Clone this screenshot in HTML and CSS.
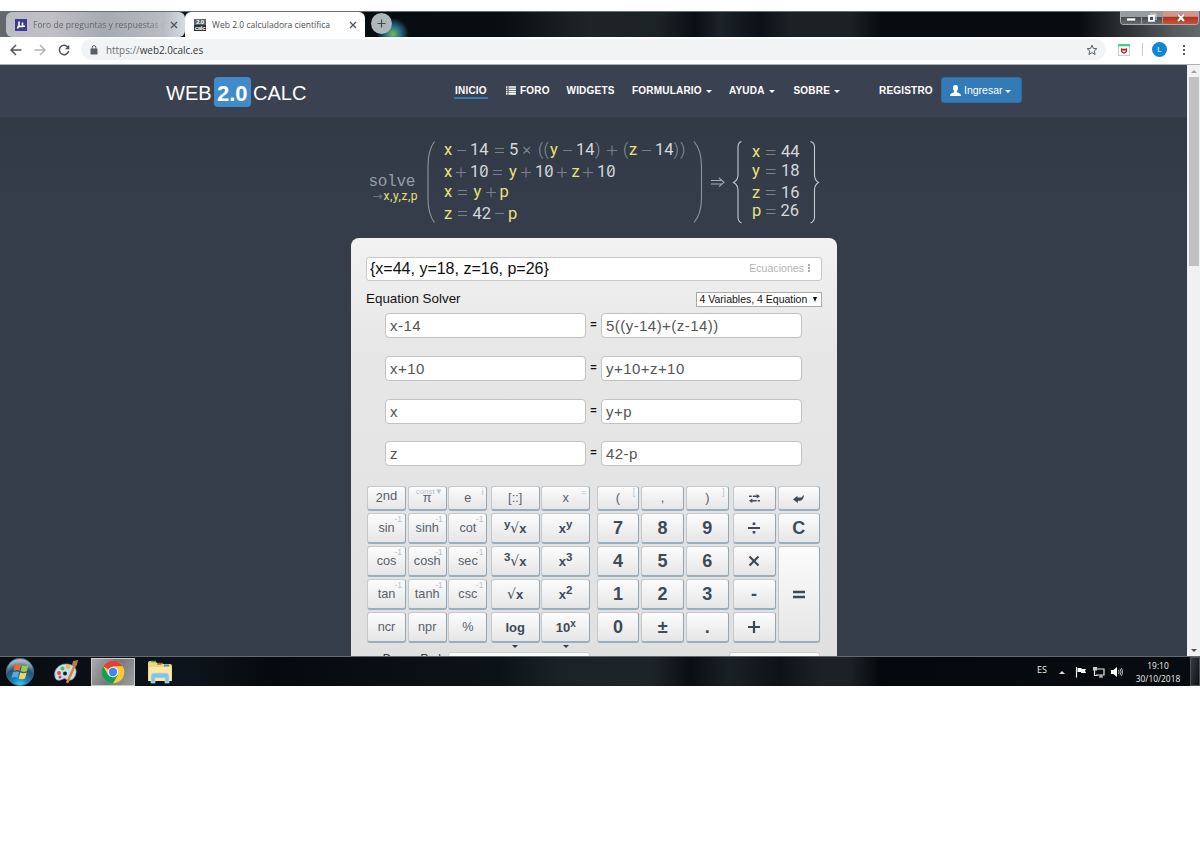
FILE: index.html
```html
<!DOCTYPE html>
<html lang="es">
<head>
    <meta charset="UTF-8">
    <title>Web 2.0 calculadora científica</title>
    <link rel="stylesheet" href="styles.css">
</head>
<body>

<div class="screen">
    <!-- Browser tabs -->
    <div class="tabstrip">
        <div class="tab tab-back">
            <svg class="favicon" viewBox="0 0 12 12"><rect width="12" height="12" fill="#3b3d94"/><path d="M4 2.500V7.500H7.500V3.500M7.500 7.200H10M3.500 7L2.500 9.500" fill="none" stroke="#fff" stroke-width="1.600"/></svg>
            <span class="tab-title faded">Foro de preguntas y respuestas d</span>
            <svg class="close" viewBox="0 0 8 8"><path d="M1 1l6 6M7 1L1 7"/></svg>
        </div>
        <div class="tab tab-active">
            <div class="favicon calc-icon"><span>2.0</span><span>calc</span></div>
            <span class="tab-title">Web 2.0 calculadora científica</span>
            <svg class="close" viewBox="0 0 8 8"><path d="M1 1l6 6M7 1L1 7"/></svg>
        </div>
        <div class="new-tab"><svg viewBox="0 0 10 10"><path d="M5 .5v9M.5 5h9" stroke="#444b50" stroke-width="1.300"/></svg></div>
        <div class="window-buttons">
            <span class="min"><svg viewBox="0 0 12 10"><rect x="1.500" y="5" width="9" height="3" fill="#fff" stroke="#444" stroke-width=".6"/></svg></span>
            <span class="max"><svg viewBox="0 0 12 10"><path d="M4 1h6v6" fill="none" stroke="#ddd" stroke-width="1"/><path d="M3 2.800h5v5h-5z" fill="none" stroke="#fff" stroke-width="1.800"/></svg></span>
            <span class="quit"><svg viewBox="0 0 12 10"><path d="M3 1.500l6 6.500M9 1.500l-6 6.500" stroke="#5d3b3b" stroke-width="3.300"/><path d="M3 1.500l6 6.500M9 1.500l-6 6.500" stroke="#fff" stroke-width="2.200"/></svg></span>
        </div>
    </div>

    <!-- Address bar -->
    <div class="toolbar">
        <svg class="tool" viewBox="0 0 12 12"><path d="M11.500 6H1.500M6 1L1 6l5 5" stroke="#50545a"/></svg>
        <svg class="tool" viewBox="0 0 12 12"><path d="M.5 6h10M6 1l5 5-5 5" stroke="#b2b4b8"/></svg>
        <svg class="tool" viewBox="0 0 12 12"><path d="M10 3.300A4.700 4.700 0 1 0 10.700 7" stroke="#50545a"/><path d="M11.300 .8v4.400H6.900z" fill="#50545a" stroke="none"/></svg>
        <div class="address">
            <svg class="lock" viewBox="0 0 8 10"><rect x=".5" y="3.500" width="7" height="6" rx=".6" fill="#5a5e63"/><path d="M2.200 4V2.400a1.800 1.800 0 0 1 3.600 0V4" fill="none" stroke="#5a5e63"/></svg>
            <span class="url"><i>https://</i>web2.0calc.es</span>
            <svg class="star" viewBox="0 0 12 12"><path d="M6 1.200l1.400 3.200 3.500.3-2.700 2.300.9 3.500L6 8.600l-3.100 1.900.9-3.500L1.100 4.700l3.500-.3z" fill="none" stroke="#5a5e63"/></svg>
        </div>
        <svg class="shield" viewBox="0 0 12 12"><rect x=".5" y=".5" width="11" height="11" fill="#fff" stroke="#ccc"/><rect width="12" height="2.300" fill="#40cf8b"/><path d="M3 4l1.500.7h3L9 4v4L6 10 3 8z" fill="#c8202f"/><path d="M5 6.200v1.500h2V6.200" fill="none" stroke="#fff"/></svg>
        <div class="divider"></div>
        <div class="avatar">L</div>
        <div class="dots"></div>
    </div>

    <div class="viewport">
        <div class="page">
            <header class="site-header">
                <div class="logo">WEB<b>2.0</b>CALC</div>
                <nav class="menu">
                    <span><u>INICIO</u></span>
                    <span><svg class="list" viewBox="0 0 10 9"><path d="M0 1h1.500M2.500 1H10M0 3.300h1.500M2.500 3.300H10M0 5.600h1.500M2.500 5.600H10M0 7.900h1.500M2.500 7.900H10" stroke="#fff" stroke-width="1.600"/></svg>FORO</span>
                    <span>WIDGETS</span>
                    <span>FORMULARIO<em class="caret"></em></span>
                    <span>AYUDA<em class="caret"></em></span>
                    <span>SOBRE<em class="caret"></em></span>
                    <span>REGISTRO</span>
                </nav>
                <div class="login"><svg viewBox="0 0 11 11"><path d="M5.500 0C7.500 0 8.300 1.400 8.100 3.200 7.900 4.700 7.300 5.500 6.900 6v1.300c1.500.8 4.100 1 4.100 3.700H0c0-2.700 2.600-2.900 4.100-3.700V6C3.700 5.500 3.100 4.700 2.900 3.200 2.700 1.400 3.500 0 5.500 0z" fill="#fff"/></svg>Ingresar<em class="caret"></em></div>
            </header>

            <!-- Typeset formula -->
            <svg class="formula" viewBox="360 135 470 95">
                <g class="brackets">
                    <path d="M434.500 141.500Q428 150 428 166V198Q428 214 434.500 222.500"/>
                    <path d="M694 141.500Q701.500 150 701.500 166V198Q701.500 214 694 222.500"/>
                    <path class="brace" d="M741.500 141.500Q738 142.500 738 147V175Q738 180 733.500 182.500Q738 185 738 190V217Q738 221.500 741.500 223"/>
                    <path class="brace" d="M810.500 141.500Q814.500 142.500 814.500 147V175Q814.500 180 818.500 182.500Q814.500 185 814.500 190V217Q814.500 221.500 810.500 223"/>
                    <path class="arrow" d="M711 180.500h11M711 184h11M719 178l5 4.300-5 4.300"/>
                    <path class="faint" d="M373 196.500h9M379.500 194.500l2.500 2-2.500 2"/>
                </g>
                <text class="solve" x="368.500" y="186">solve</text>
                <text class="small v" x="383.500" y="199.500">x,y,z,p</text>
                <g class="ops">
                    <path d="M457 150.500h9M495 148.500h9M495 152.500h9M523.500 147l6.500 6.500M530 147l-6.500 6.500M563 150.500h9M607 150.500h10M612 145.500v10M642 150.500h9"/>
                    <path d="M456 172.500h10M461 167.500v10M493 170.500h9M493 174.500h9M521 172.500h10M526 167.500v10M557 172.500h10M562 167.500v10M583 172.500h10M588 167.500v10"/>
                    <path d="M458 190.500h9M458 194.500h9M486 192.500h10M491 187.500v10M458 211.500h9M458 215.500h9M495 213.500h9"/>
                    <path d="M766 150.500h9.500M766 154.500h9.500M766 169.500h9.500M766 173.500h9.500M766 190.500h9.500M766 194.500h9.500M766 209.500h9.500M766 213.500h9.500"/>
                </g>
                <text y="155"><tspan class="v" x="444">x</tspan><tspan x="470">14</tspan><tspan x="509">5</tspan><tspan class="p" x="538 543.500">((</tspan><tspan class="v" x="550">y</tspan><tspan x="576">14</tspan><tspan class="p" x="595">)</tspan><tspan class="p" x="623">(</tspan><tspan class="v" x="629">z</tspan><tspan x="655">14</tspan><tspan class="p" x="673.500 680">))</tspan></text>
                <text y="177"><tspan class="v" x="444">x</tspan><tspan x="470">10</tspan><tspan class="v" x="509">y</tspan><tspan x="535">10</tspan><tspan class="v" x="571.500">z</tspan><tspan x="597">10</tspan></text>
                <path class="slash" d="M482 173.500l3.500-5.500M547 173.500l3.500-5.500M609 173.500l3.500-5.500"/>
                <text y="197"><tspan class="v" x="444">x</tspan><tspan class="v" x="473.500">y</tspan><tspan class="v" x="499.500">p</tspan></text>
                <text y="218.500"><tspan class="v" x="444">z</tspan><tspan x="472.500">42</tspan><tspan class="v" x="508">p</tspan></text>
                <text y="157"><tspan class="v" x="752">x</tspan><tspan x="781">44</tspan></text>
                <text y="176"><tspan class="v" x="752">y</tspan><tspan x="781">18</tspan></text>
                <text y="197.500"><tspan class="v" x="752">z</tspan><tspan x="781">16</tspan></text>
                <text y="216"><tspan class="v" x="752">p</tspan><tspan x="780.500">26</tspan></text>
            </svg>

            <main class="calculator">
                <div class="answer"><span>{x=44, y=18, z=16, p=26}</span><span class="mode">Ecuaciones <i class="more"></i></span></div>
                <div class="solver-head">
                    <span>Equation Solver</span>
                    <div class="select">4 Variables, 4 Equation<em></em></div>
                </div>
                <div class="equations">
                    <div class="equation"><div class="field">x-14</div><b>=</b><div class="field">5((y-14)+(z-14))</div></div>
                    <div class="equation"><div class="field">x+10</div><b>=</b><div class="field">y+10+z+10</div></div>
                    <div class="equation"><div class="field">x</div><b>=</b><div class="field">y+p</div></div>
                    <div class="equation"><div class="field">z</div><b>=</b><div class="field">42-p</div></div>
                </div>

                <div class="keypad">
                    <div class="keys functions">
                        <div class="key">2<sup>nd</sup></div>
                        <div class="key"><small class="const">const▼</small>π</div>
                        <div class="key">e<small>i</small></div>
                        <div class="key">sin<small>-1</small></div>
                        <div class="key">sinh<small>-1</small></div>
                        <div class="key">cot<small>-1</small></div>
                        <div class="key">cos<small>-1</small></div>
                        <div class="key">cosh<small>-1</small></div>
                        <div class="key">sec<small>-1</small></div>
                        <div class="key">tan<small>-1</small></div>
                        <div class="key">tanh<small>-1</small></div>
                        <div class="key">csc<small>-1</small></div>
                        <div class="key">ncr</div>
                        <div class="key">npr</div>
                        <div class="key">%</div>
                    </div>
                    <div class="keys powers">
                        <div class="key light">[::]</div>
                        <div class="key light">x<small>=</small></div>
                        <div class="key"><sup>y</sup><span class="root">√</span>x</div>
                        <div class="key">x<sup>y</sup></div>
                        <div class="key"><sup>3</sup><span class="root">√</span>x</div>
                        <div class="key">x<sup>3</sup></div>
                        <div class="key"><span class="root">√</span>x</div>
                        <div class="key">x<sup>2</sup></div>
                        <div class="key">log<em class="below"></em></div>
                        <div class="key">10<sup class="tiny">x</sup><em class="below"></em></div>
                    </div>
                    <div class="keys digits">
                        <div class="key light">(<small>[</small></div>
                        <div class="key light">,</div>
                        <div class="key light">)<small>]</small></div>
                        <div class="key">7</div>
                        <div class="key">8</div>
                        <div class="key">9</div>
                        <div class="key">4</div>
                        <div class="key">5</div>
                        <div class="key">6</div>
                        <div class="key">1</div>
                        <div class="key">2</div>
                        <div class="key">3</div>
                        <div class="key">0</div>
                        <div class="key">±</div>
                        <div class="key">.</div>
                    </div>
                    <div class="keys operators">
                        <div class="key"><svg width="11" height="9" viewBox="0 0 10 8"><path d="M0 2h2.500M3.500 2h4M10 6H8M7 6H2" stroke="#3e4b57" stroke-width="1.300"/><path d="M7 0l3 2-3 2zM3 4L0 6l3 2z" fill="#3e4b57"/></svg></div>
                        <div class="key"><svg width="11" height="9" viewBox="0 0 10 8"><path d="M0 4.800L4 1.500v1.700h3q1.200 0 1.800-1.700L10 1Q9.500 5.500 6.500 6H4.500v2z" fill="#3e4b57"/></svg></div>
                        <div class="key"><svg width="14" height="14" viewBox="0 0 14 14"><path d="M1 7h12" stroke="#3e4b57" stroke-width="2"/><rect x="5.700" y="1.500" width="2.600" height="2.500" fill="#3e4b57"/><rect x="5.700" y="10" width="2.600" height="2.500" fill="#3e4b57"/></svg></div>
                        <div class="key">C</div>
                        <div class="key"><svg width="12" height="12" viewBox="0 0 12 12"><path d="M1.500 1.500l9 9M10.500 1.500l-9 9" stroke="#3e4b57" stroke-width="2.200"/></svg></div>
                        <div class="key equals"><svg width="14" height="12" viewBox="0 0 14 12"><path d="M1 4h12M1 9h12" stroke="#3e4b57" stroke-width="2.600"/></svg></div>
                        <div class="key">-</div>
                        <div class="key"><svg width="14" height="14" viewBox="0 0 14 14"><path d="M1 7h12M7 1v12" stroke="#3e4b57" stroke-width="2.200"/></svg></div>
                    </div>
                </div>

                <div class="options">
                    <div class="radios"><span>● Deg</span><span>● Rad</span></div>
                    <div class="history"></div>
                    <div class="side"></div>
                </div>
            </main>
        </div>
        <div class="scrollbar"><i class="up"></i><div class="thumb"></div><i class="down"></i></div>
    </div>

    <!-- Windows taskbar -->
    <div class="taskbar">
        <svg class="start" viewBox="0 0 30 30">
            <defs>
                <radialGradient id="orb" cx=".5" cy="1" r=".9"><stop offset="0" stop-color="#38d4ff"/><stop offset=".35" stop-color="#1680b8"/><stop offset=".7" stop-color="#245373"/><stop offset="1" stop-color="#a3bac7"/></radialGradient>
            </defs>
            <circle cx="15" cy="15" r="13.700" fill="url(#orb)" stroke="#46647a"/>
            <path d="M10 8q3.500-2 6-.3l-1.500 6q-3-1.500-6.200.3z" fill="#ee6a31"/>
            <path d="M17 8.200q3 1.500 6.500-.2l-1.600 6.200q-3.200 1.500-6.400-.1z" fill="#9bca4a"/>
            <path d="M8 15.300q3.200-1.700 6.200-.2l-1.500 5.700q-3-1.500-6.200.2z" fill="#54a9e1"/>
            <path d="M15.200 15.500q3.200 1.600 6.400.1l-1.600 5.900q-3.200 1.600-6.300 0z" fill="#ffd24b"/>
        </svg>
        <svg class="paint" viewBox="0 0 26 26">
            <path d="M2 18C0 11 6 5 13 5s11 4 10 9-4 8-8 7c-3-1-3-2-5-1s-7 3-8-2z" fill="#c6dff0" stroke="#809db3" stroke-width=".7"/>
            <circle cx="6" cy="14" r="2" fill="#e14e43"/><circle cx="9.500" cy="9.500" r="2" fill="#63b84a"/><circle cx="15" cy="7.800" r="2.200" fill="#f4b631"/><circle cx="7" cy="18" r="1.500" fill="#cd4141"/><circle cx="12" cy="14.500" r="2" fill="#17212a"/>
            <path d="M14 24L22 6" stroke="#dd822e" stroke-width="2.500"/><path d="M19 6l1-4 5-1-1 5-2 2z" fill="#b47a50"/>
        </svg>
        <div class="task-active">
            <svg viewBox="0 0 24 24"><circle cx="12" cy="12" r="11.300" fill="#f9ca34"/><path d="M12 12L2.200 6.300A11.300 11.300 0 0 1 21.800 6.300H12z" fill="#db4437"/><path d="M2.200 6.300A11.300 11.300 0 0 0 12 23.300L17 14.800 7 14.800z" fill="#159b5a"/><circle cx="12" cy="12" r="5.300" fill="#f3f3f3"/><circle cx="12" cy="12" r="4.200" fill="#4285f4"/></svg>
        </div>
        <svg class="folder" viewBox="0 0 26 24">
            <path d="M1 3q0-2 2-2h5l2 2h5l1 1h7q2 0 2 2v15H1z" fill="#edd77f"/><path d="M2 7h22v14H2z" fill="#fae9a3"/><path d="M4 1.500h5M10 4h4" stroke="#46a849" stroke-width="1.500"/><path d="M11 3.500h4" stroke="#cf4d38" stroke-width="1.500"/><path d="M17 5.500h5" stroke="#438dd5" stroke-width="2"/>
            <path d="M4 23v-7q0-3 3-3h12q3 0 3 3v7h-4v-5H8v5z" fill="#86c5e2" stroke="#b9e3f2" stroke-width=".7"/>
        </svg>
        <div class="tray">
            <span class="lang">ES</span>
            <i class="tray-up"></i>
            <svg class="flag" viewBox="0 0 12 12"><path d="M1.500 1v10.500" stroke="#eee" stroke-width="1.200"/><path d="M2.500 2h4v1h4.500l-1 1.700 1 2.300H6V6H2.500z" fill="#fff"/></svg>
            <svg class="network" viewBox="0 0 12 12"><path d="M3 3h8v6H3M6 11h4M8 9v2M1.500 4v5.500h3" fill="none" stroke="#e5e5e5" stroke-width="1.200"/><rect x="0" y="1" width="4" height="3.500" fill="#ccc"/></svg>
            <svg class="volume" viewBox="0 0 12 12"><path d="M0 4h2.500L6 1v10L2.500 8H0z" fill="#fff"/><path d="M7.500 4q1.200 2 0 4M9 2.700q2.200 3.300 0 6.600M10.500 2q2.500 4 0 8" fill="none" stroke="#ddd" stroke-width=".8"/></svg>
            <div class="clock">19:10<br>30/10/2018</div>
            <div class="show-desktop"></div>
        </div>
    </div>
</div>

</body>
</html>
```

FILE: styles.css
```css
* {
    box-sizing: border-box;
}

body {
    margin: 0;
    background: #fff;
    font-family: "Liberation Sans", Arial, sans-serif;
}

svg {
    display: block;
    flex: none;
}

i {
    font-style: normal;
}

.screen {
    width: 1200px;
    height: 675px;
    margin-top: 11px;
    overflow: hidden;
}

/* Browser chrome */
.tabstrip {
    height: 26px;
    display: flex;
    padding-left: 6px;
    background:
        radial-gradient(circle at 393px 22px, #76bd58 0, #28748b 7px, transparent 16px),
        linear-gradient(90deg, #63686b 0, #63686b 6px, #060b10 200px, #080d12 500px, #1e2428 590px, #1b2226 660px, #0a0f14 695px, #1b2228 720px, #0b1116 760px, #1b2125 790px, #1b2125 850px, #070c11 880px, #080c11 1080px, #565b5f 1175px, #64696c);
    border-top: 1px solid #6b6f71;
    font-family: "Open Sans", "Noto Sans", sans-serif;
    font-size: 8.5px;
}

.tab {
    height: 25px;
    display: flex;
    align-items: center;
    padding-left: 9px;
    border-radius: 6px 6px 0 0;
    color: #4b4e52;
}

.tab-back {
    width: 179px;
    background: linear-gradient(90deg, #babdc4, #c1bfc6 25%, #a5abb1 55%, #b9bcc2 88%, #d4dce3);
    border-radius: 6px;
    color: #64676d;
}

.tab-active {
    width: 180px;
    background: #fff;
}

.favicon {
    width: 12px;
    height: 12px;
    margin-right: 6px;
}

.calc-icon {
    display: flex;
    flex-direction: column;
    background: linear-gradient(#5b646a 50%, #293137 50%);
    color: #fff;
    font: bold 6px/6px "Liberation Sans", sans-serif;
    text-align: center;
    letter-spacing: -.3px;
}

.tab-title {
    width: 132px;
    white-space: nowrap;
    overflow: hidden;
    letter-spacing: .03px;
}

.faded {
    -webkit-mask-image: linear-gradient(90deg, #000 88%, transparent);
}

.close {
    width: 8px;
    height: 8px;
    margin-left: 5px;
    stroke: #50545a;
    stroke-width: 1.3;
}

.new-tab {
    width: 21px;
    height: 21px;
    margin: 1px 0 0 6px;
    border-radius: 50%;
    background: #aeb8b9;
    display: flex;
    align-items: center;
    justify-content: center;
}

.new-tab svg {
    width: 9px;
    height: 9px;
}

.window-buttons {
    display: flex;
    width: 79px;
    height: 14px;
    margin: -1px 1px 0 auto;
    border: 1px solid #a9abad;
    border-top: 0;
    border-radius: 0 0 4px 4px;
    overflow: hidden;
}

.window-buttons span {
    width: 21px;
    border-right: 1px solid #999;
    background: linear-gradient(#999c9e 45%, #474c50 50%, #686d70);
    display: flex;
    align-items: center;
    justify-content: center;
}

.window-buttons .quit {
    flex: 1;
    border: 0;
    background: linear-gradient(#d1978d 40%, #b2341e 50%, #c95439);
}

.window-buttons svg {
    width: 12px;
    height: 10px;
}

.toolbar {
    height: 28px;
    display: flex;
    align-items: center;
    padding: 0 15px 2px 10px;
    background: #fff;
    border-bottom: 1px solid #adb0b4;
}

.tool {
    width: 12px;
    height: 12px;
    margin-right: 12px;
    fill: none;
    stroke-width: 1.5;
}

.address {
    flex: 1;
    height: 21px;
    margin-right: 12px;
    padding: 0 8px 0 9px;
    border-radius: 11px;
    background: #f1f3f4;
    display: flex;
    align-items: center;
}

.tool + .address {
    margin-left: -1px;
}

.lock {
    width: 8px;
    height: 10px;
}

.url {
    flex: 1;
    margin-left: 8px;
    font: 9.9px "Open Sans", sans-serif;
    color: #35383c;
}

.url i {
    color: #6b6f74;
}

.star {
    width: 12px;
    height: 12px;
}

.shield {
    width: 12px;
    height: 12px;
}

.divider {
    width: 1px;
    height: 13px;
    margin: 0 9px 0 12px;
    background: #c9cbce;
}

.avatar {
    width: 15px;
    height: 15px;
    margin-right: 16px;
    border-radius: 50%;
    background: #0d87d2;
    color: #fff;
    font-size: 8px;
    line-height: 15px;
    text-align: center;
}

.dots {
    width: 2px;
    height: 2px;
    background: #55595e;
    box-shadow: 0 -4px #55595e, 0 4px #55595e;
}

/* Web page */
.viewport {
    height: 591px;
    display: flex;
}

.page {
    width: 1187px;
    overflow: hidden;
    background: linear-gradient(#2f3944, #343d49 25%, #343d49);
}

.site-header {
    height: 53px;
    display: flex;
    align-items: flex-start;
    padding-left: 166px;
    background: #3a4252;
    border-bottom: 1px solid #343b49;
    color: #fff;
}

.logo {
    width: 289px;
    padding-top: 12px;
    display: flex;
    font-size: 20px;
    line-height: 33px;
}

.logo b {
    width: 37.5px;
    height: 30px;
    margin: 0 2px 0 2px;
    border-radius: 4px;
    background: #428bca;
    font-size: 22px;
    line-height: 33px;
    text-align: center;
}

.menu {
    display: grid;
    grid-template-columns: 51px 60.5px 65.5px 97px 64.5px 85.5px 62px;
    padding-top: 19px;
    font-size: 10px;
    line-height: 13px;
    font-weight: bold;
    letter-spacing: .2px;
}

.menu span {
    display: flex;
    align-items: center;
    align-self: start;
}

.menu u {
    margin-left: -1px;
    padding: 0 1px 0 1px;
    border-bottom: 2px solid #337ab7;
    text-decoration: none;
}

.list {
    width: 10px;
    height: 9px;
    margin-right: 4px;
}

.caret {
    border: 3px solid transparent;
    border-top-color: #fff;
    border-bottom: 0;
    margin: 2px 0 0 4px;
}

.login {
    width: 81px;
    height: 26px;
    margin-top: 12px;
    margin-left: -.5px;
    border: 1px solid #2e6da4;
    border-radius: 3px;
    background: #337ab7;
    display: flex;
    align-items: center;
    padding-left: 8.5px;
    font-size: 10.5px;
}

.login svg {
    width: 11px;
    height: 11px;
    margin-right: 3px;
}

.login .caret {
    margin-left: 2px;
}

.formula {
    width: 470px;
    height: 95px;
    margin: 17px 0 8px 360px;
    font: 16.5px Roboto, sans-serif;
    fill: #d5d8dc;
}

.formula text {
    letter-spacing: .1px;
}

.formula .v {
    fill: #e9e27c;
}

.formula .p {
    fill: #8c949d;
    font-weight: 300;
}

.formula .small {
    font-size: 12px;
    letter-spacing: .55px;
}

.formula .solve {
    font-family: "Liberation Mono", monospace;
    font-size: 16px;
    letter-spacing: -.3px;
    fill: #929ca8;
}

.ops, .brackets, .slash {
    fill: none;
    stroke: #78818b;
    stroke-width: 1.1;
}

.brackets {
    stroke: #8c959e;
}

.brackets .faint {
    stroke: #68727c;
}

.brackets .arrow {
    stroke: #a4abb3;
}

.brackets .brace, .slash {
    stroke: #c4c9ce;
}

/* Calculator */
.calculator {
    width: 486px;
    height: 430px;
    margin-left: 351px;
    padding: 19px 15px 0;
    border-radius: 8px 8px 0 0;
    background: linear-gradient(#f2f2f2, #e7e7e7 25%, #e0e0e0);
}

.answer {
    height: 24px;
    padding: 0 11px 0 3px;
    border: 1px solid #c8c8c8;
    border-radius: 3px;
    background: #fff;
    display: flex;
    justify-content: space-between;
    font-size: 16px;
    line-height: 22px;
    color: #111;
}

.mode {
    font-size: 10.6px;
    color: #b5b5b5;
    display: flex;
    align-items: center;
    line-height: 20px;
    height: 20px;
}

.more {
    width: 2px;
    height: 2px;
    margin-left: 4px;
    background: #aaa;
    box-shadow: 0 -3px #aaa, 0 3px #aaa;
}

.solver-head {
    height: 32px;
    padding-top: 10px;
    display: flex;
    justify-content: space-between;
    align-items: flex-start;
    font-size: 13.4px;
    line-height: 16px;
    color: #111;
}

.select {
    width: 126px;
    height: 15px;
    margin-top: .6px;
    padding-left: 2.5px;
    border: 1px solid #aaa;
    background: #fff;
    display: flex;
    align-items: center;
    font-size: 10.5px;
    white-space: nowrap;
}

.select em {
    margin-left: 6px;
    border: 2.5px solid transparent;
    border-top: 5px solid #111;
    border-bottom: 0;
}

.equations {
    padding-left: 19px;
}

.equation {
    height: 24px;
    margin-bottom: 18.8px;
    display: flex;
}

.equation b {
    width: 15px;
    color: #111;
    font-size: 11px;
    line-height: 23px;
    text-align: center;
}

.field {
    width: 201px;
    height: 25px;
    padding-left: 4px;
    border: 1px solid #c2c2c2;
    border-radius: 4px;
    background: #fff;
    color: #555;
    font-size: 15px;
    line-height: 23px;
    letter-spacing: .45px;
}

.keypad {
    display: flex;
    padding-top: 2px;
    margin: 0 0 9px 1px;
}

.keys {
    display: grid;
    grid-template-rows: 25px 31px 31px 31px 31px;
    row-gap: 2px;
}

.functions {
    grid-template-columns: 39px 39px 39px;
    column-gap: 1.7px;
    margin-right: 3.3px;
    font-size: 13px;
}

.powers {
    grid-template-columns: 49px 49px;
    column-gap: 1.5px;
    margin-right: 6.5px;
    font-size: 13px;
    font-weight: bold;
}

.digits {
    grid-template-columns: 42.5px 42.5px 42.5px;
    column-gap: 2.2px;
    margin-right: 4px;
    font-size: 18px;
    font-weight: bold;
}

.operators {
    grid-template-columns: 43px 42px;
    column-gap: 2.2px;
    font-size: 18px;
    font-weight: bold;
}

.key {
    position: relative;
    display: flex;
    align-items: center;
    justify-content: center;
    border: 1px solid #c5c9cc;
    border-right-color: #92a7b5;
    border-bottom: 2px solid #9aafbc;
    border-radius: 3px;
    background: linear-gradient(#fcfcfc, #e6e6e6);
    color: #3e4b57;
}

.functions .key, .key.light {
    color: #56616c;
    font-size: 12.7px;
    font-weight: normal;
}

.equals {
    grid-row: span 3;
}

.key sup {
    align-self: flex-start;
    margin-top: 4px;
    font-size: 11.5px;
    line-height: 13px;
}

.functions .key sup {
    margin-top: 2px;
    font-size: 13px;
}

.key .tiny {
    font-size: 10px;
}

.root {
    font-family: "DejaVu Sans", sans-serif;
    font-size: 14px;
    font-weight: normal;
}

.key small {
    position: absolute;
    top: 0;
    right: 3px;
    font-size: 8.5px;
    line-height: 10px;
    font-weight: normal;
    color: #b8bfc6;
}

.key .const {
    right: 3px;
    font-size: 8px;
}

.below {
    position: absolute;
    top: 32px;
    border: 3px solid transparent;
    border-top-color: #303c46;
    border-bottom: 0;
}

.options {
    display: flex;
    color: #222;
    font-size: 11px;
}

.radios {
    width: 82px;
    padding-left: 7px;
    display: flex;
    gap: 8px;
    line-height: 13px;
    white-space: nowrap;
}

.history {
    width: 142px;
    height: 24px;
    border: 1px solid #ccc;
    border-radius: 3px;
    background: #fff;
}

.side {
    width: 91px;
    height: 24px;
    margin-left: 139px;
    border: 1px solid #ccc;
    border-radius: 3px;
    background: #fff;
}

.scrollbar {
    width: 13px;
    display: flex;
    flex-direction: column;
    align-items: center;
    padding: 4px 0;
    background: #f1f1f1;
}

.thumb {
    width: 10px;
    height: 189px;
    margin-top: 4px;
    background: #c1c1c1;
}

.up {
    border: 3px solid transparent;
    border-bottom-color: #a0a0a0;
    border-top: 0;
}

.scrollbar .up {
    margin-top: 1px;
}

.down {
    margin-top: auto;
    border: 3px solid transparent;
    border-top-color: #505050;
    border-bottom: 0;
}

/* Taskbar */
.taskbar {
    height: 30px;
    display: flex;
    align-items: center;
    padding-left: 5px;
    border-top: 1px solid #626970;
    background: linear-gradient(90deg, #080c11 0, #0d141b 190px, #060a0e 270px, #0c1318 500px, #1b2227 560px, #1e2529 650px, #090e12 690px, #1a2126 730px, #0c1216 780px, #1b2124 820px, #1b2124 850px, #05090d 880px, #080c10);
}

.start {
    width: 30px;
    height: 30px;
}

.paint {
    width: 26px;
    height: 26px;
    margin: 0 12px 0 18px;
}

.task-active {
    width: 44px;
    height: 28px;
    border: 1px solid #c9cbcd;
    background: linear-gradient(120deg, #a9abad, #76797b 50%, #9c9ea0);
    display: flex;
    align-items: center;
    justify-content: center;
}

.task-active svg {
    width: 24px;
    height: 24px;
}

.folder {
    width: 26px;
    height: 24px;
    margin-left: 12px;
}

.tray {
    height: 29px;
    margin-left: auto;
    display: flex;
    align-items: center;
    color: #eee;
    font-family: "Open Sans", "Noto Sans", sans-serif;
    font-size: 8.4px;
}

.lang {
    margin-bottom: 4px;
    font-size: 9px;
}

.tray-up {
    margin: 2px 10px 0 12px;
    border: 3px solid transparent;
    border-bottom-color: #ddd;
    border-top: 0;
}

.flag, .network, .volume {
    width: 12px;
    height: 12px;
    margin-right: 6px;
}

.clock {
    width: 58px;
    line-height: 13px;
    text-align: center;
}

.show-desktop {
    width: 10px;
    height: 29px;
    margin-left: 3px;
    border: 1px solid #4c5358;
    background: linear-gradient(100deg, #343b40, #0c1115);
}
```
